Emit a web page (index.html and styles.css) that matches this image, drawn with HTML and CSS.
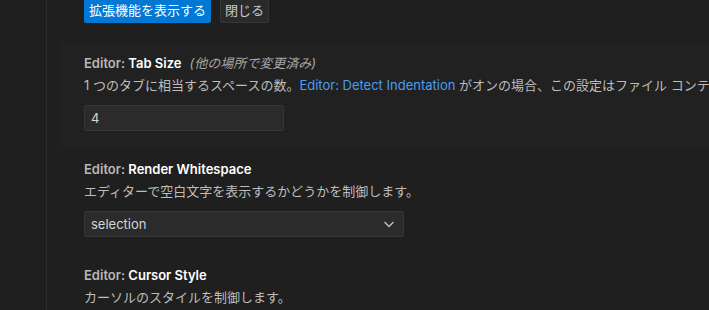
FILE: index.html
```html
<!DOCTYPE html>
<html lang="ja">
<head>
  <meta charset="UTF-8">
  <title>設定</title>
  <link rel="stylesheet" href="styles.css">
</head>
<body>
  <div class="toc"></div>

  <div class="settings">
    <div class="notice">
      <button class="btn primary">拡張機能を表示する</button>
      <button class="btn secondary">閉じる</button>
    </div>

    <div class="item hovered">
      <div class="title"><span class="cat">Editor: </span><span class="label">Tab Size</span><span class="modified">(他の場所で変更済み)</span></div>
      <div class="desc">1 つのタブに相当するスペースの数。<a class="link">Editor: Detect Indentation</a> がオンの場合、この設定はファイル コンテンツに基づいて上書きされます。</div>
      <input class="input" type="text" value="4">
    </div>

    <div class="item">
      <div class="title"><span class="cat">Editor: </span><span class="label">Render Whitespace</span></div>
      <div class="desc">エディターで空白文字を表示するかどうかを制御します。</div>
      <div class="select">
        <span>selection</span>
        <svg width="16" height="16" viewBox="0 0 16 16"><path d="M3.5 6l4.5 4.5 4.5-4.5" fill="none" stroke="#c5c5c5" stroke-width="1.3"/></svg>
      </div>
    </div>

    <div class="item">
      <div class="title"><span class="cat">Editor: </span><span class="label">Cursor Style</span></div>
      <div class="desc">カーソルのスタイルを制御します。</div>
    </div>
  </div>
</body>
</html>
```

FILE: styles.css
```css
* {
  box-sizing: border-box;
}

body {
  margin: 0;
  height: 310px;
  overflow: hidden;
  display: flex;
  background-color: #1f1f1f;
  font-family: Inter, "Noto Sans CJK JP", sans-serif;
  font-size: 13px;
  color: #cccccc;
}

.toc {
  width: 47px;
  flex-shrink: 0;
  border-right: 1px solid #2b2b2b;
}

.settings {
  flex: 1;
  min-width: 0;
  padding-left: 13px;
}

.notice {
  display: flex;
  gap: 9px;
  margin-top: -3px;
  padding-left: 24px;
  margin-bottom: 19px;
}

.btn {
  height: 26px;
  padding: 0 4px;
  border-radius: 2px;
  font-family: inherit;
  font-size: 13px;
  line-height: 24px;
  cursor: pointer;
}

.primary {
  background-color: #0078d4;
  border: 1px solid #0078d4;
  color: #ffffff;
}

.secondary {
  background-color: #2a2a2a;
  border: 1px solid #363636;
  color: #c8c8c8;
}

.item {
  padding: 12px 0 17px 24px;
}

.hovered {
  background-color: #212121;
}

.title {
  line-height: 18px;
  font-weight: 600;
  white-space: nowrap;
}

.cat {
  color: #b8b8b8;
}

.label {
  color: #ffffff;
}

.modified {
  margin-left: 8px;
  font-weight: 400;
  font-style: italic;
  color: #a8a8a8;
}

.desc {
  margin-top: 4px;
  line-height: 18px;
  white-space: nowrap;
  overflow: hidden;
  color: #bdbdbd;
}

.link {
  color: #4a9ff0;
}

.input {
  display: block;
  margin-top: 11px;
  width: 200px;
  height: 26px;
  padding: 0 6px;
  background-color: #2b2b2b;
  border: 1px solid #363636;
  border-radius: 2px;
  font-family: inherit;
  font-size: 13px;
  color: #d4d4d4;
}

.select {
  margin-top: 11px;
  width: 320px;
  height: 26px;
  display: flex;
  align-items: center;
  justify-content: space-between;
  padding: 0 6px 0 6px;
  background-color: #2b2b2b;
  border: 1px solid #363636;
  border-radius: 2px;
  color: #d4d4d4;
}
```
